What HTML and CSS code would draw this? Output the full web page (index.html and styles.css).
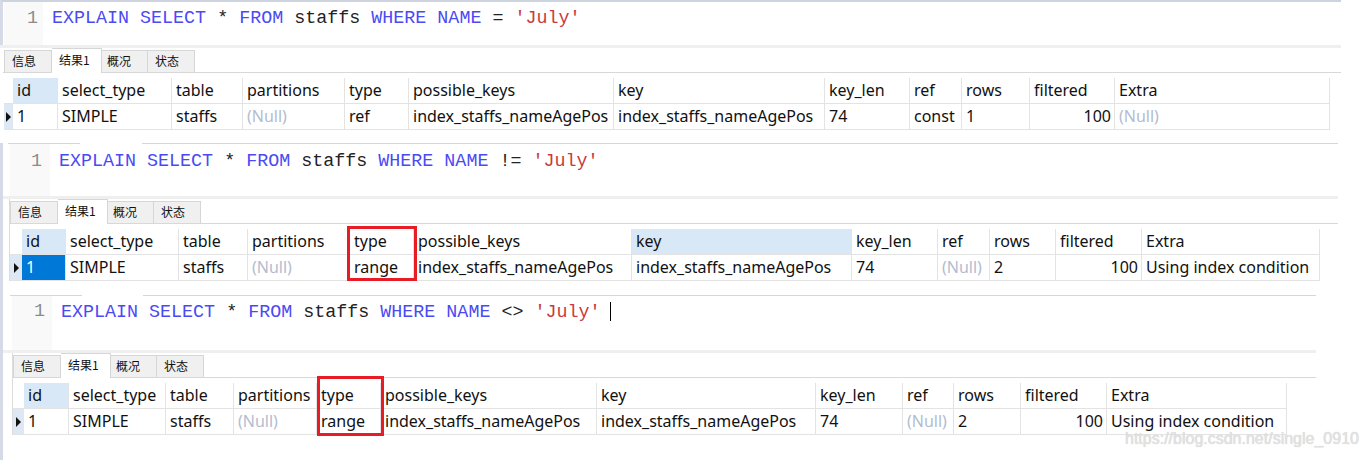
FILE: index.html
```html
<!DOCTYPE html>
<html>
<head>
<meta charset="utf-8">
<link rel="stylesheet" href="styles.css">
</head>
<body>
<div class="panel p1">
  <div class="editor">
    <span class="ln">1</span><span class="code"><span class="kw">EXPLAIN</span> <span class="kw">SELECT</span> * <span class="kw">FROM</span> staffs <span class="kw">WHERE</span> <span class="kw">NAME</span> = <span class="str">'July'</span></span>
  </div>
  <div class="band"></div>
  <div class="results">
    <div class="tabs">
      <div class="tab t1">信息</div><div class="tab t2 active">结果1</div><div class="tab t3">概况</div><div class="tab t4">状态</div>
    </div>
    <div class="grid">
      <div class="c h ind"></div><div class="c h sel">id</div><div class="c h">select_type</div><div class="c h">table</div><div class="c h">partitions</div><div class="c h">type</div><div class="c h">possible_keys</div><div class="c h">key</div><div class="c h">key_len</div><div class="c h">ref</div><div class="c h">rows</div><div class="c h">filtered</div><div class="c h">Extra</div>
      <div class="c ind rowmark"><span class="tri"></span></div><div class="c">1</div><div class="c">SIMPLE</div><div class="c">staffs</div><div class="c null">(Null)</div><div class="c">ref</div><div class="c">index_staffs_nameAgePos</div><div class="c">index_staffs_nameAgePos</div><div class="c">74</div><div class="c">const</div><div class="c">1</div><div class="c num">100</div><div class="c null">(Null)</div>
    </div>
  </div>
</div>

<div class="panel p2">
  <div class="topline"><span class="seg s1"></span><span class="seg s2"></span></div>
  <div class="editor">
    <span class="ln">1</span><span class="code"><span class="kw">EXPLAIN</span> <span class="kw">SELECT</span> * <span class="kw">FROM</span> staffs <span class="kw">WHERE</span> <span class="kw">NAME</span> != <span class="str">'July'</span></span>
  </div>
  <div class="band"></div>
  <div class="results">
    <div class="tabs">
      <div class="tab t1">信息</div><div class="tab t2 active">结果1</div><div class="tab t3">概况</div><div class="tab t4">状态</div>
    </div>
    <div class="grid">
      <div class="c h ind"></div><div class="c h sel">id</div><div class="c h">select_type</div><div class="c h">table</div><div class="c h">partitions</div><div class="c h">type</div><div class="c h">possible_keys</div><div class="c h sel">key</div><div class="c h">key_len</div><div class="c h">ref</div><div class="c h">rows</div><div class="c h">filtered</div><div class="c h">Extra</div>
      <div class="c ind rowmark"><span class="tri"></span></div><div class="c cur">1</div><div class="c">SIMPLE</div><div class="c">staffs</div><div class="c null">(Null)</div><div class="c">range</div><div class="c">index_staffs_nameAgePos</div><div class="c">index_staffs_nameAgePos</div><div class="c">74</div><div class="c null">(Null)</div><div class="c">2</div><div class="c num">100</div><div class="c">Using index condition</div>
      <div class="redbox"></div>
    </div>
  </div>
</div>

<div class="panel p3">
  <div class="topline"><span class="seg s1"></span><span class="seg s2"></span></div>
  <div class="editor">
    <span class="ln">1</span><span class="code"><span class="kw">EXPLAIN</span> <span class="kw">SELECT</span> * <span class="kw">FROM</span> staffs <span class="kw">WHERE</span> <span class="kw">NAME</span> &lt;&gt; <span class="str">'July'</span> <span class="caret"></span></span>
  </div>
  <div class="band"></div>
  <div class="results">
    <div class="tabs">
      <div class="tab t1">信息</div><div class="tab t2 active">结果1</div><div class="tab t3">概况</div><div class="tab t4">状态</div>
    </div>
    <div class="grid">
      <div class="c h ind"></div><div class="c h sel">id</div><div class="c h">select_type</div><div class="c h">table</div><div class="c h">partitions</div><div class="c h">type</div><div class="c h">possible_keys</div><div class="c h">key</div><div class="c h">key_len</div><div class="c h">ref</div><div class="c h">rows</div><div class="c h">filtered</div><div class="c h">Extra</div>
      <div class="c ind rowmark"><span class="tri"></span></div><div class="c">1</div><div class="c">SIMPLE</div><div class="c">staffs</div><div class="c null">(Null)</div><div class="c">range</div><div class="c">index_staffs_nameAgePos</div><div class="c">index_staffs_nameAgePos</div><div class="c">74</div><div class="c null">(Null)</div><div class="c">2</div><div class="c num">100</div><div class="c">Using index condition</div>
      <div class="redbox"></div>
    </div>
  </div>
  <div class="watermark">https://blog.csdn.net/single_0910</div>
</div>
</body>
</html>
```

FILE: styles.css
```css
html, body {
  margin: 0;
  padding: 0;
  background: #ffffff;
}
body {
  width: 1365px;
  height: 460px;
  overflow: hidden;
  font-family: "Noto Sans", "Noto Sans CJK SC", sans-serif;
  color: #111;
}

.panel {
  display: flex;
  flex-direction: column;
  position: relative;
  box-sizing: border-box;
}
.p1 { height: 143px; width: 1341px; }
.p2 { height: 152px; width: 1338px; border-left: 3px solid #d5dae6; }
.p3 { height: 165px; width: 1316px; border-left: 3px solid #d5dae6; }

/* top line of lower panels */
.topline {
  display: flex;
  height: 1px;
}
.seg { display: block; height: 1px; background: #d6d6d6; }
.p2 .s1 { margin-left: 5px; width: 72px; }
.p2 .s2 { margin-left: 62px; flex: 1; }
.p3 .s1 { margin-left: 7px; width: 72px; }
.p3 .s2 { margin-left: 61px; flex: 1; }

/* editor */
.editor {
  display: flex;
  align-items: flex-start;
  box-sizing: border-box;
  font-family: "Liberation Mono", "Courier New", monospace;
  font-size: 18.35px;
  line-height: 20px;
  white-space: pre;
}
.p1 .editor {
  height: 45px;
  border-top: 2px solid #cdd3df;
  border-left: 3px solid #d5dae6;
  padding-top: 7px;
  padding-left: 24px;
  background: linear-gradient(to right, #ffffff 0, #ffffff 1px, #f9f9f9 1px, #f9f9f9 40px, #ffffff 40px);
}
.p2 .editor {
  height: 52px;
  padding-top: 8px;
  padding-left: 28px;
  background: linear-gradient(to right, #ffffff 0, #ffffff 7px, #f9f9f9 7px, #f9f9f9 47px, #ffffff 47px);
}
.p3 .editor {
  height: 54px;
  padding-top: 6px;
  padding-left: 31px;
  background: linear-gradient(to right, #ffffff 0, #ffffff 9px, #f9f9f9 9px, #f9f9f9 49px, #ffffff 49px);
}
.ln { color: #8c8c8c; width: 11px; }
.code { color: #222; }
.p1 .code { margin-left: 14px; }
.p2 .code { margin-left: 17px; }
.p3 .code { margin-left: 16px; }
.kw { color: #4a4af4; }
.str { color: #c93a3a; }
.caret {
  display: inline-block;
  width: 1px;
  height: 19px;
  background: #000;
  vertical-align: -4px;
  margin-left: -2px;
}

.band { height: 3px; background: #efefef; flex: none; }

/* results */
.results { display: flex; flex-direction: column; }
.p1 .results { margin-left: 3px; }
.p2 .results { margin-left: 6px; border-left: 1px solid #dcdcdc; }
.p3 .results { margin-left: 9px; border-left: 1px solid #dcdcdc; }

.tabs {
  display: flex;
  align-items: flex-end;
  height: 24px;
  border-bottom: 1px solid #d8d8d8;
  font-family: "Noto Sans CJK SC", sans-serif;
  font-size: 12px;
  color: #111;
}
.p1 .tabs { padding-left: 1px; }
.p2 .tabs { padding-left: 0; }
.p3 .tabs { padding-left: 0; }
.tab {
  box-sizing: border-box;
  height: 22px;
  line-height: 20px;
  padding-left: 7px;
  background: #f0f0f0;
  border-top: 1px solid #d6d6d6;
  border-right: 1px solid #d6d6d6;
}
.tab.t1 { width: 48px; border-left: 1px solid #d6d6d6; }
.tab.t2 { width: 50px; }
.tab.t3 { width: 46px; padding-left: 5px; }
.tab.t4 { width: 47px; }
.tab.active {
  height: 25px;
  margin-bottom: -1px;
  background: #ffffff;
  line-height: 22px;
  border-left: none;
}

/* grid */
.grid {
  display: grid;
  position: relative;
  margin-top: 5px;
  font-size: 16px;
  line-height: 25px;
}
.p1 .grid {
  margin-left: 1px;
  grid-template-columns: 9px 45px 114px 71px 102px 64px 205px 211px 85px 52px 68px 85px 215px;
}
.p2 .grid {
  margin-left: 0;
  grid-template-columns: 12px 44px 113px 69px 102px 64px 218px 220px 86px 52px 66px 86px 178px;
}
.p3 .grid {
  margin-left: 0;
  grid-template-columns: 11px 45px 97px 68px 83px 64px 216px 219px 87px 51px 67px 86px 180px;
}
.c {
  box-sizing: border-box;
  height: 26px;
  padding-left: 4px;
  border-right: 1px solid #e3e3e3;
  border-bottom: 1px solid #e3e3e3;
  white-space: nowrap;
  overflow: hidden;
  color: #111;
}
.c.h { background: #ffffff; }
.c.sel { background: #d9e8f6; }
.c.ind { padding: 0; border-right: none; }
.c.rowmark {
  background: #dde8f4;
  display: flex;
  align-items: center;
  justify-content: center;
}
.tri {
  width: 0;
  height: 0;
  border-top: 5px solid transparent;
  border-bottom: 5px solid transparent;
  border-left: 5px solid #111;
}
.c.null { color: #b3bcd0; }
.c.num { text-align: right; padding-right: 3px; }
.c.cur { background: #0078d7; color: #ffffff; }

.redbox {
  position: absolute;
  box-sizing: border-box;
  border: 3px solid #e81c24;
  pointer-events: none;
}
.p2 .redbox { left: 337px; top: -3px; width: 70px; height: 55px; }
.p3 .redbox { left: 304px; top: -7px; width: 67px; height: 60px; }

.watermark {
  position: absolute;
  left: 1122px;
  top: 135px;
  font-family: "Liberation Sans", Arial, sans-serif;
  font-size: 16px;
  color: #e2e2e2;
  text-shadow: 0 0 1px #c8c8c8;
  white-space: nowrap;
}
```
